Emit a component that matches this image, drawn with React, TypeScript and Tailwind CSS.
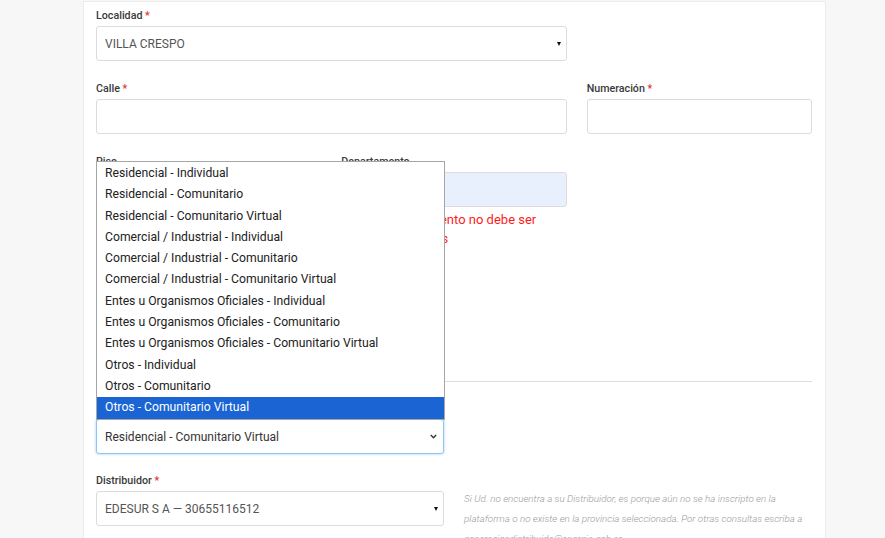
const categorias = [
  "Residencial - Individual",
  "Residencial - Comunitario",
  "Residencial - Comunitario Virtual",
  "Comercial / Industrial - Individual",
  "Comercial / Industrial - Comunitario",
  "Comercial / Industrial - Comunitario Virtual",
  "Entes u Organismos Oficiales - Individual",
  "Entes u Organismos Oficiales - Comunitario",
  "Entes u Organismos Oficiales - Comunitario Virtual",
  "Otros - Individual",
  "Otros - Comunitario",
  "Otros - Comunitario Virtual",
];

const Label = ({ text, required }: { text: string; required?: boolean }) => (
  <div className="text-[10.7px] leading-[14px] font-medium text-[#3a3a3a]">
    {text}
    {required && <span className="text-[#e3342f]"> *</span>}
  </div>
);

const Caret = () => (
  <span className="w-0 h-0 border-l-[2.5px] border-r-[2.5px] border-t-[4px] border-l-transparent border-r-transparent border-t-[#111]" />
);

const SelectBox = ({ value }: { value: string }) => (
  <div className="mt-[3px] h-[35px] flex items-center justify-between border border-[#dcdcdc] rounded-[3px] bg-white pl-[8px] pr-[5px] text-[12px] text-[#555]">
    <span>{value}</span>
    <Caret />
  </div>
);

const Input = ({ className = "bg-white" }: { className?: string }) => (
  <div className={`h-[35px] border border-[#dcdcdc] rounded-[3px] ${className}`} />
);

export default function App() {
  return (
    <div className="relative min-h-screen bg-[#f7f7f7] font-['Roboto',sans-serif] overflow-hidden">
      <div className="ml-[83px] mt-px w-[743px] h-[560px] bg-white border-x border-t border-[#ececec] pt-[7px] pl-[12px] pr-[13px]">
        <div className="grid grid-cols-12 gap-x-[20px]">
          <div className="col-span-8">
            <Label text="Localidad" required />
            <SelectBox value="VILLA CRESPO" />
          </div>
        </div>

        <div className="grid grid-cols-12 gap-x-[20px] mt-[21px]">
          <div className="col-span-8">
            <Label text="Calle" required />
            <div className="mt-[3px]">
              <Input />
            </div>
          </div>
          <div className="col-span-4">
            <Label text="Numeración" required />
            <div className="mt-[3px]">
              <Input />
            </div>
          </div>
        </div>

        <div className="grid grid-cols-12 gap-x-[20px] mt-[21px]">
          <div className="col-span-4">
            <Label text="Piso" />
            <div className="mt-[3px]">
              <Input />
            </div>
          </div>
          <div className="col-span-4">
            <Label text="Departamento" />
            <div className="mt-[3px]">
              <Input className="bg-[#e8f0fe]" />
            </div>
            <div className="mt-[3px] text-[13px] leading-[19px] text-[#ff1a1a]">
              El Nro. Departamento no debe ser
              <br />
              mayor a 10 dígitos
            </div>
          </div>
        </div>

        <div className="mt-[133px] border-t border-[#dddddd]" />

        <div className="grid grid-cols-12 gap-x-[20px] mt-[19px]">
          <div className="col-span-6">
            <Label text="Categoría de usuario" required />
            <div className="mt-[4px] h-[35px] flex items-center justify-between border border-[#8cc4f2] rounded-[3px] shadow-[0_0_3px_rgba(102,175,233,0.6)] bg-white pl-[8px] pr-[6px] text-[12px] text-[#333]">
              <span>Residencial - Comunitario Virtual</span>
              <svg width="7" height="5" viewBox="0 0 7 5">
                <polyline points="0.8,1 3.5,3.8 6.2,1" fill="none" stroke="#333" strokeWidth="1.3" />
              </svg>
            </div>
          </div>
        </div>

        <div className="grid grid-cols-12 gap-x-[20px] mt-[20px]">
          <div className="col-span-6">
            <Label text="Distribuidor" required />
            <SelectBox value="EDESUR S A — 30655116512" />
          </div>
          <div className="col-span-6 pt-[15px] text-[9.8px] leading-[20px] italic font-light text-[#9a9a9a]">
            Si Ud. no encuentra a su Distribuidor, es porque aún no se ha inscripto en la plataforma o no existe en la provincia seleccionada. Por otras consultas escriba a generaciondistribuida@energia.gob.ar
          </div>
        </div>
      </div>

      <ul className="absolute left-[96px] top-[161px] w-[349px] bg-white border border-[#a6a6a6] text-[12.2px] text-[#222]">
        {categorias.map((c, i) => (
          <li
            key={c}
            className={`h-[21.3px] leading-[21.3px] pl-[8px] ${
              i === 0 ? "mt-px" : ""
            } ${i === categorias.length - 1 ? "bg-[#1a64d3] text-white" : ""}`}
          >
            {c}
          </li>
        ))}
      </ul>
    </div>
  );
}
